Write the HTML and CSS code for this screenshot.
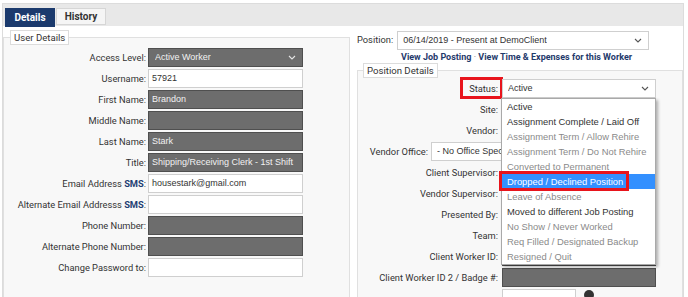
FILE: index.html
```html
<!DOCTYPE html>
<html lang="en">

<head>
    <meta charset="UTF-8">
    <meta name="viewport" content="width=device-width, initial-scale=1.0">
    <title>Worker Details</title>
    <link rel="stylesheet" href="styles.css">
</head>

<body>
    <div class="panel">
        <div class="tabs">
            <span class="tab active">Details</span>
            <span class="tab">History</span>
        </div>

        <div class="content">
            <!-- left column: user details -->
            <fieldset class="box user">
                <legend>User Details</legend>
                <div class="grid">
                    <label>Access Level:</label>
                    <div class="field dark select"><span>Active Worker</span>
                        <svg width="8" height="5" viewBox="0 0 8 5"><path d="M1 1l3 3 3-3" fill="none" stroke="#e6e6e6" stroke-width="1.1"/></svg>
                    </div>
                    <label>Username:</label>
                    <div class="field">57921</div>
                    <label>First Name:</label>
                    <div class="field dark">Brandon</div>
                    <label>Middle Name:</label>
                    <div class="field dark"></div>
                    <label>Last Name:</label>
                    <div class="field dark">Stark</div>
                    <label>Title:</label>
                    <div class="field dark">Shipping/Receiving Clerk - 1st Shift</div>
                    <label>Email Address <b class="sms">SMS</b>:</label>
                    <div class="field">housestark@gmail.com</div>
                    <label>Alternate Email Addresss <b class="sms">SMS</b>:</label>
                    <div class="field"></div>
                    <label>Phone Number:</label>
                    <div class="field dark"></div>
                    <label>Alternate Phone Number:</label>
                    <div class="field dark"></div>
                    <label>Change Password to:</label>
                    <div class="field"></div>
                </div>
            </fieldset>

            <!-- right column: position -->
            <div class="right">
                <div class="posrow">
                    <label>Position:</label>
                    <div class="field select position"><span>06/14/2019 - Present at DemoClient</span>
                        <svg width="8" height="5" viewBox="0 0 8 5"><path d="M1 1l3 3 3-3" fill="none" stroke="#555" stroke-width="1.1"/></svg>
                    </div>
                </div>
                <div class="links">
                    <a href="#">View Job Posting</a> <span class="dot">&middot;</span> <a href="#">View Time &amp; Expenses for this Worker</a>
                </div>

                <fieldset class="box pos">
                    <legend>Position Details</legend>
                    <div class="grid">
                        <label><span class="mark">Status:</span></label>
                        <div class="field select status"><span>Active</span>
                            <svg width="8" height="5" viewBox="0 0 8 5"><path d="M1 1l3 3 3-3" fill="none" stroke="#555" stroke-width="1.1"/></svg>
                            <div class="menu">
                                <div class="on">Active</div>
                                <div class="on">Assignment Complete / Laid Off</div>
                                <div>Assignment Term / Allow Rehire</div>
                                <div>Assignment Term / Do Not Rehire</div>
                                <div>Converted to Permanent</div>
                                <div class="sel"><span class="mark">Dropped / Declined Position</span></div>
                                <div>Leave of Absence</div>
                                <div class="on">Moved to different Job Posting</div>
                                <div>No Show / Never Worked</div>
                                <div>Req Filled / Designated Backup</div>
                                <div>Resigned / Quit</div>
                            </div>
                        </div>
                        <label>Site:</label>
                        <div class="field"></div>
                        <label>Vendor:</label>
                        <div class="field"></div>
                        <div class="wide-row">
                            <label>Vendor Office:</label>
                            <div class="field select office"><span class="cut">- No Office Specified -</span></div>
                        </div>
                        <label>Client Supervisor:</label>
                        <div class="field"></div>
                        <label>Vendor Supervisor:</label>
                        <div class="field"></div>
                        <label>Presented By:</label>
                        <div class="field"></div>
                        <label>Team:</label>
                        <div class="field"></div>
                        <label>Client Worker ID:</label>
                        <div class="field dark"></div>
                        <label>Client Worker ID 2 / Badge #:</label>
                        <div class="field dark"></div>
                        <label></label>
                        <div class="inline">
                            <div class="field short"></div>
                            <svg class="help" width="10" height="10" viewBox="0 0 10 10"><circle cx="5" cy="5" r="5" fill="#333"/></svg>
                        </div>
                    </div>
                </fieldset>
            </div>
        </div>
    </div>
</body>

</html>
```

FILE: styles.css
```css
/* Worker details page */
* {
    box-sizing: border-box;
}

html,
body {
    overflow: hidden;
}

body {
    margin: 0;
    font-family: Roboto, "Liberation Sans", Arial, sans-serif;
    font-size: 9.3px;
    color: #333;
    background-color: #fff;
}

.panel {
    margin: 3px 4px 0 2px;
    border: 1px solid #dcdcdc;
    border-bottom: none;
}

/* tabs */
.tabs {
    display: flex;
    align-items: flex-start;
    height: 22px;
    padding: 4px 0 0 2px;
    background-color: #e8e8e8;
}

.tab {
    width: 50px;
    height: 17px;
    margin-right: 1px;
    border: 1px solid #d6d6d6;
    background-color: #f5f5f5;
    font-size: 10px;
    font-weight: bold;
    line-height: 15px;
    text-align: center;
}

.tab.active {
    height: 19px;
    border-color: #1b3a6d;
    background-color: #1b3a6d;
    color: #fff;
    line-height: 17px;
}

.content {
    display: flex;
    gap: 7px;
    padding-top: 4px;
}

/* fieldsets */
.box {
    margin: 0;
    min-width: 0;
    border: 1px solid #e0e0e0;
    background-color: #f8f8f8;
}

.box legend {
    margin-left: 6px;
    padding: 0 3px;
    height: 15px;
    border: 1px solid #dcdcdc;
    background-color: #fff;
    font-size: 9.6px;
    line-height: 13px;
}

.user {
    width: 347px;
    padding: 3px 0 12px 0;
}

.right {
    width: 326px;
    padding-top: 1px;
}

.pos {
    padding: 1px 0 0 0;
}

.pos legend {
    margin-left: 5px;
}

.grid {
    display: grid;
    grid-template-columns: 142px 155px;
    column-gap: 2px;
    row-gap: 2px;
}

.pos .grid {
    grid-template-columns: 140px 154px;
    column-gap: 4px;
}

label {
    line-height: 19px;
    text-align: right;
    white-space: nowrap;
}

.sms {
    color: #1f3f73;
}

/* inputs */
.field {
    height: 19px;
    padding: 0 3px;
    border: 1px solid #cfcfcf;
    background-color: #fff;
    font-family: "Liberation Sans", Arial, sans-serif;
    font-size: 9px;
    line-height: 17px;
    white-space: nowrap;
    overflow: hidden;
}

.field.dark {
    border-color: #4f4f4f;
    background-color: #6d6d6d;
    color: #f2f2f2;
}

.select {
    display: flex;
    align-items: center;
    justify-content: space-between;
    padding: 0 6px 0 5px;
}

.dark.select {
    padding-left: 6px;
}

.select > span {
    overflow: hidden;
}

.position {
    width: 252px;
}

.status {
    position: relative;
    overflow: visible;
}

.wide-row {
    grid-column: 1 / -1;
    display: flex;
    justify-content: flex-end;
    gap: 3px;
}

.office {
    width: 225px;
}

.office .cut {
    width: 64px;
}

.inline {
    display: flex;
    align-items: flex-start;
    gap: 8px;
}

.short {
    width: 74px;
}

.help {
    margin-top: 1px;
}

/* position row and links */
.posrow {
    display: flex;
    align-items: flex-start;
    gap: 4px;
}

.posrow label {
    line-height: 17px;
}

.links {
    padding-left: 44px;
    margin-top: 1px;
    font-size: 9px;
    line-height: 12px;
    white-space: nowrap;
}

.links a {
    color: #1f3a6b;
    font-weight: bold;
    text-decoration: none;
}

.dot {
    color: #777;
}

/* open dropdown */
.menu {
    position: absolute;
    top: 18px;
    left: -2px;
    width: 155px;
    border: 1px solid #a9a9a9;
    background-color: #fff;
    box-shadow: 2px 2px 3px rgba(0, 0, 0, 0.3);
    font-size: 9.4px;
    z-index: 5;
}

.menu div {
    height: 15px;
    padding-left: 5px;
    line-height: 15px;
    color: #8a8a8a;
}

.menu div.on {
    color: #333;
}

.menu div.sel {
    background-color: #3390ff;
    color: #fff;
}

/* red highlight boxes */
.mark {
    position: relative;
    display: inline-block;
}

.mark::after {
    content: "";
    position: absolute;
    left: -9px;
    right: -5px;
    top: -2px;
    bottom: -1px;
    border: 3px solid #e8141c;
}

.sel .mark::after {
    left: -8px;
    right: -6px;
    top: -3px;
    bottom: -2px;
}
```
